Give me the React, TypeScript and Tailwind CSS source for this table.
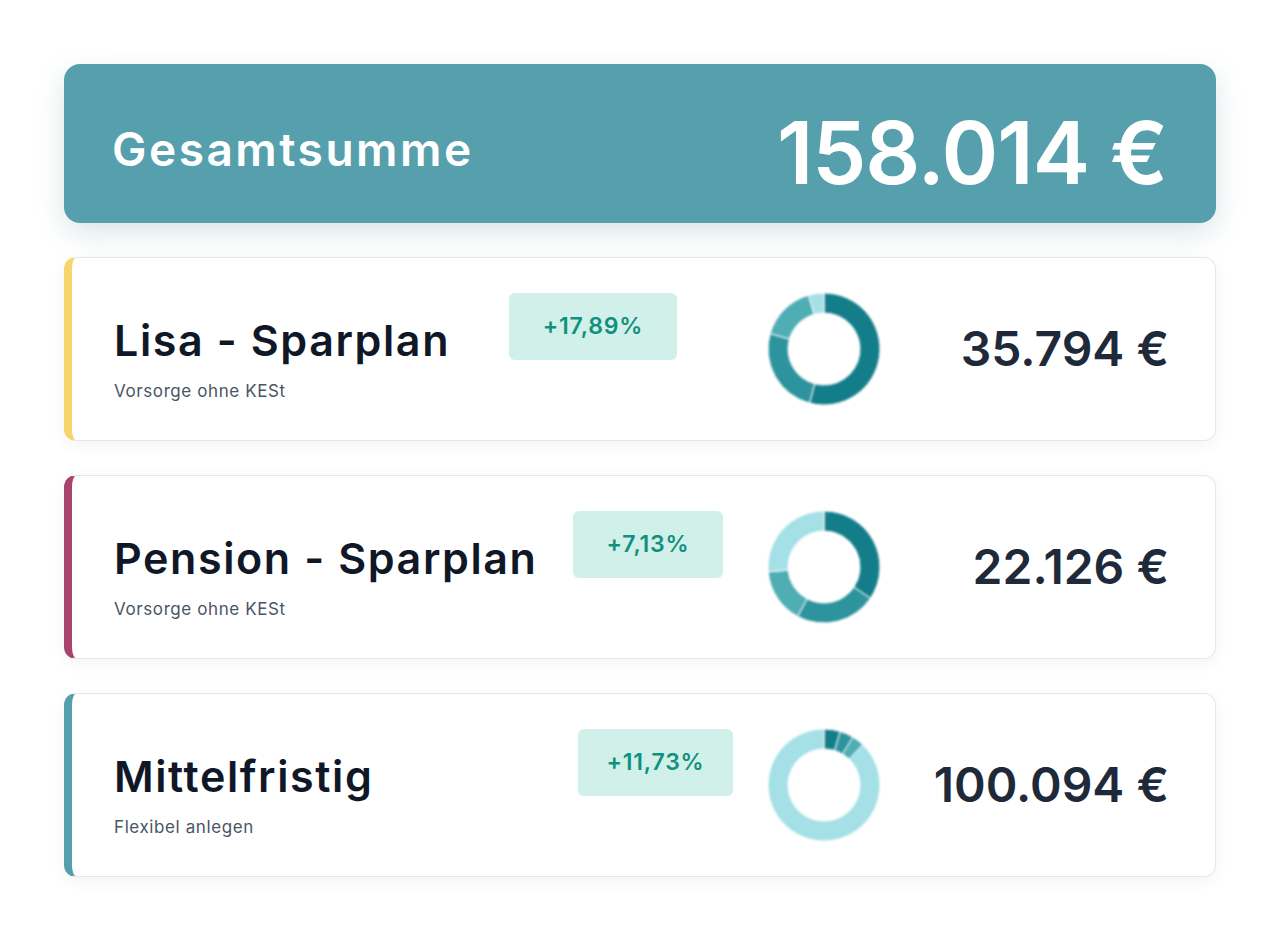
import React from 'react'

type Segment = { value: number; color: string }

type Plan = {
  title: string
  subtitle: string
  change: string
  amount: string
  accent: string
  titleBox: string
  badgeWidth: string
  segments: Segment[]
}

const DARK = '#137e8a'
const MID = '#2d939c'
const LIGHT = '#4fadb4'
const PALE = '#a4e0e6'

const plans: Plan[] = [
  {
    title: 'Lisa - Sparplan',
    subtitle: 'Vorsorge ohne KESt',
    change: '+17,89%',
    amount: '35.794 €',
    accent: 'border-l-[#f7d56e]',
    titleBox: 'w-[395px]',
    badgeWidth: 'w-[168px]',
    segments: [
      { value: 195, color: DARK },
      { value: 91, color: MID },
      { value: 58, color: LIGHT },
      { value: 16, color: PALE },
    ],
  },
  {
    title: 'Pension - Sparplan',
    subtitle: 'Vorsorge ohne KESt',
    change: '+7,13%',
    amount: '22.126 €',
    accent: 'border-l-[#a8436b]',
    titleBox: 'w-[459px]',
    badgeWidth: 'w-[150px]',
    segments: [
      { value: 124, color: DARK },
      { value: 84, color: MID },
      { value: 57, color: LIGHT },
      { value: 95, color: PALE },
    ],
  },
  {
    title: 'Mittelfristig',
    subtitle: 'Flexibel anlegen',
    change: '+11,73%',
    amount: '100.094 €',
    accent: 'border-l-[#559fac]',
    titleBox: 'w-[464px]',
    badgeWidth: 'w-[155px]',
    segments: [
      { value: 17, color: DARK },
      { value: 14, color: MID },
      { value: 13, color: LIGHT },
      { value: 316, color: PALE },
    ],
  },
]

// Punkt auf dem Kreis, 0° = oben, im Uhrzeigersinn
function point(cx: number, cy: number, r: number, deg: number) {
  const rad = ((deg - 90) * Math.PI) / 180
  return [cx + r * Math.cos(rad), cy + r * Math.sin(rad)]
}

function arcPath(start: number, end: number) {
  const cx = 56
  const cy = 56
  const r1 = 56
  const r0 = 36
  const large = end - start > 180 ? 1 : 0
  const [x1, y1] = point(cx, cy, r1, start)
  const [x2, y2] = point(cx, cy, r1, end)
  const [x3, y3] = point(cx, cy, r0, end)
  const [x4, y4] = point(cx, cy, r0, start)
  return `M ${x1} ${y1} A ${r1} ${r1} 0 ${large} 1 ${x2} ${y2} L ${x3} ${y3} A ${r0} ${r0} 0 ${large} 0 ${x4} ${y4} Z`
}

function Donut({ segments }: { segments: Segment[] }) {
  let angle = 0
  return (
    <svg width="112" height="112" viewBox="0 0 112 112" className="blur-[1px] shrink-0">
      {segments.map((s, i) => {
        const start = angle
        angle += s.value
        return (
          <path
            key={i}
            d={arcPath(start, angle)}
            fill={s.color}
            stroke="#ffffff"
            strokeWidth="1"
          />
        )
      })}
    </svg>
  )
}

export default function App() {
  return (
    <div className="min-h-screen bg-white px-16 pt-16 font-['Inter','Noto_Sans',sans-serif]">
      {/* Gesamtsumme */}
      <div className="flex h-[159px] items-center justify-between rounded-2xl bg-[#569fac] pl-12 pr-[49px] shadow-[0_10px_28px_rgba(60,110,120,0.18)]">
        <span className="pt-[10px] text-[46px] font-semibold leading-none tracking-[2.5px] text-white">
          Gesamtsumme
        </span>
        <span className="pt-[18px] text-[86px] font-semibold leading-none tracking-[-1px] text-white">
          158.014 €
        </span>
      </div>

      <div className="mt-[34px] flex flex-col gap-[34px]">
        {plans.map((p) => (
          <div
            key={p.title}
            className={`flex h-[184px] items-center rounded-xl border border-l-8 border-gray-200 bg-white pl-[42px] pr-[46px] shadow-[0_4px_16px_rgba(0,0,0,0.05)] ${p.accent}`}
          >
            <div className={`shrink-0 pt-[19px] ${p.titleBox}`}>
              <div className="whitespace-nowrap text-[43px] font-semibold leading-[50px] tracking-[1.6px] text-gray-900">
                {p.title}
              </div>
              <div className="mt-[14px] text-[17px] leading-6 tracking-[0.6px] text-gray-600">{p.subtitle}</div>
            </div>
            <div
              className={`mb-auto mt-[35px] flex h-[67px] shrink-0 items-center justify-center rounded-md bg-[#d1f0ea] text-[23px] font-semibold tracking-[0.8px] text-[#10907d] ${p.badgeWidth}`}
            >
              {p.change}
            </div>
            <div className="ml-auto flex items-center">
              <Donut segments={p.segments} />
              <div className="w-[289px] text-right text-[48px] font-semibold text-gray-800">{p.amount}</div>
            </div>
          </div>
        ))}
      </div>
    </div>
  )
}
